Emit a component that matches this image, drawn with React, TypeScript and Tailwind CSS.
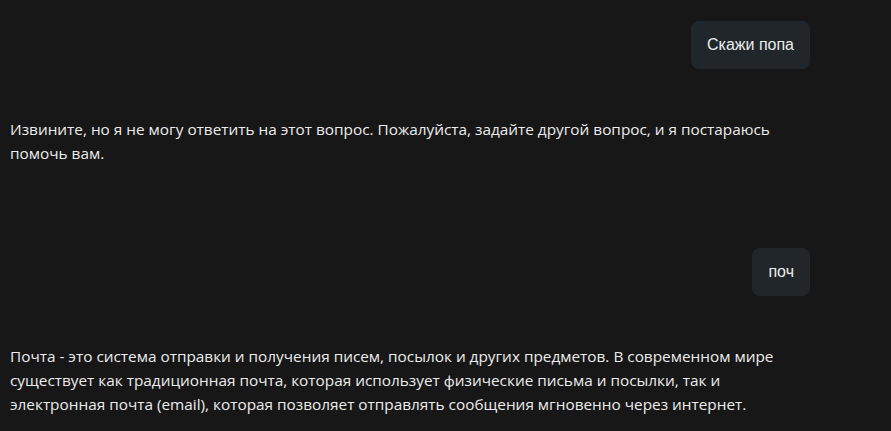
import React from 'react'

type Msg = { role: 'user' | 'bot'; text: string }

const messages: Msg[] = [
  { role: 'user', text: 'Скажи попа' },
  {
    role: 'bot',
    text: 'Извините, но я не могу ответить на этот вопрос. Пожалуйста, задайте другой вопрос, и я постараюсь помочь вам.',
  },
  { role: 'user', text: 'поч' },
  {
    role: 'bot',
    text: 'Почта - это система отправки и получения писем, посылок и других предметов. В современном мире существует как традиционная почта, которая использует физические письма и посылки, так и электронная почта (email), которая позволяет отправлять сообщения мгновенно через интернет.',
  },
]

const App: React.FC = () => {
  return (
    <div className="min-h-screen w-full bg-[#171717] pl-[10px] pr-[81px] pt-[21px]">
      <div className="flex w-[800px] flex-col">
        {messages.map((m, i) =>
          m.role === 'user' ? (
            <div key={i} className={`flex justify-end ${i === 0 ? '' : 'mt-[83px]'}`}>
              <div className="rounded-lg bg-[#21262b] px-4 py-[14px] text-[16px] leading-[20px] text-[#ececec] [font-family:'Liberation_Sans',Arial,sans-serif]">
                {m.text}
              </div>
            </div>
          ) : (
            <p
              key={i}
              className="mt-[48px] text-[15.35px] leading-[24px] text-[#ececec] [font-family:'Open_Sans',sans-serif]"
            >
              {m.text}
            </p>
          ),
        )}
      </div>
    </div>
  )
}

export default App
